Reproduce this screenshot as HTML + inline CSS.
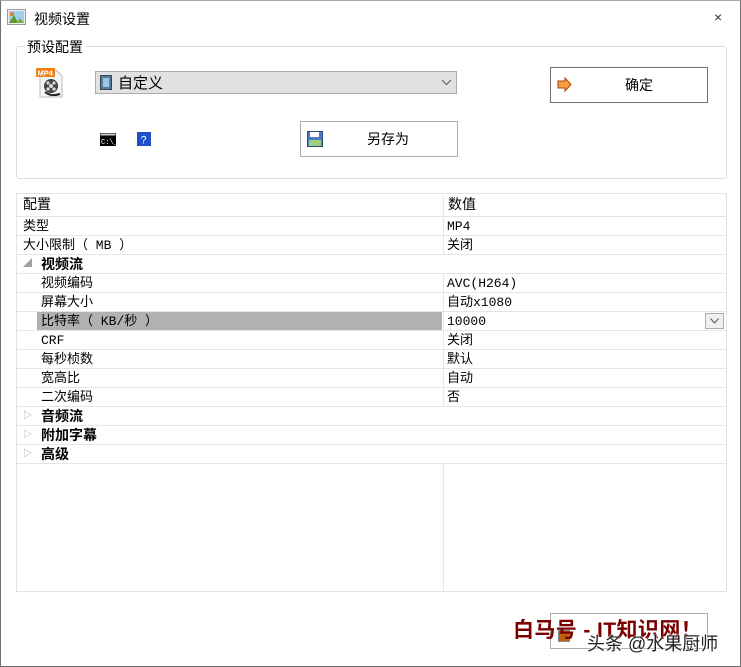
<!DOCTYPE html>
<html><head><meta charset="utf-8"><style>
*{margin:0;padding:0;box-sizing:border-box}
body{width:741px;height:667px;background:#fff;font-family:"Liberation Sans","Noto Sans CJK SC",sans-serif;font-size:14px;color:#000;position:relative;overflow:hidden}
.win{position:absolute;left:0;top:0;width:741px;height:667px;border:1px solid #707070;border-top-color:#aaa}
.abs{position:absolute}
.btn{position:absolute;border:1px solid #adadad;background:#fff}
.row{position:absolute;left:17px;width:709px;height:19px;border-bottom:1px solid #e6e6e6;font-size:13px;line-height:18px;font-family:"Liberation Mono","Noto Sans CJK SC",monospace}
.row .a{position:absolute;left:6px;top:1px}
.row .b{position:absolute;left:430px;top:1px}
.row .in{left:24px}
.row .bold{font-weight:bold;left:24px;top:0;font-family:"Noto Sans CJK SC",sans-serif}
.cat{background:#fff;z-index:2}
.tri{position:absolute;left:6px;top:0;color:#a0a0a0;font-size:9px}
</style></head><body>
<div class="win"></div>
<svg class="abs" style="left:7px;top:9px" width="19" height="16" viewBox="0 0 19 16"><rect x="0.5" y="0.5" width="18" height="15" fill="#eee" stroke="#999"/><rect x="2" y="2" width="15" height="12" fill="#9fd0f0"/><path d="M2 14 L7 6 L11 14Z" fill="#5a9a2a"/><circle cx="5" cy="5" r="2" fill="#e08020"/><path d="M9 14 L13 9 L17 14Z" fill="#7ab040"/></svg>
<div class="abs" style="left:34px;top:9px;font-size:14px">视频设置</div>
<div class="abs" style="left:714px;top:9px;font-size:14px;color:#333">×</div>
<div class="abs" style="left:16px;top:46px;width:711px;height:133px;border:1px solid #dcdcdc;border-radius:3px"></div>
<div class="abs" style="left:24px;top:37px;background:#fff;padding:0 3px;font-size:14px">预设配置</div>
<svg class="abs" style="left:36px;top:66px" width="28" height="32" viewBox="0 0 28 32"><path d="M4 4 H20 L26 10 V31 H4Z" fill="#f4f4f4" stroke="#bbb"/><rect x="0" y="2" width="19" height="9" fill="#f08010"/><text x="1.5" y="9.5" font-size="7.5" font-weight="bold" fill="#fff" font-family="Liberation Sans">MP4</text><circle cx="15" cy="20" r="7" fill="#444"/><circle cx="15" cy="20" r="2" fill="#ddd"/><circle cx="12" cy="17" r="1.6" fill="#ddd"/><circle cx="18" cy="17" r="1.6" fill="#ddd"/><circle cx="12" cy="23" r="1.6" fill="#ddd"/><circle cx="18" cy="23" r="1.6" fill="#ddd"/><path d="M9 26 Q15 31 24 28" stroke="#222" stroke-width="2" fill="none"/></svg>
<div class="abs" style="left:95px;top:71px;width:362px;height:23px;background:#e1e1e1;border:1px solid #adadad"></div>
<svg class="abs" style="left:100px;top:75px" width="12" height="15" viewBox="0 0 12 15"><rect x="0.5" y="0.5" width="11" height="14" fill="#5a7a9a" stroke="#345"/><rect x="3" y="3" width="6" height="9" fill="#9cc8e8"/></svg>
<div class="abs" style="left:118px;top:72px;font-size:15px">自定义</div>
<svg class="abs" style="left:441px;top:79px" width="11" height="7" viewBox="0 0 11 7"><path d="M1 1 L5.5 5.5 L10 1" stroke="#555" fill="none"/></svg>
<div class="btn" style="left:550px;top:67px;width:158px;height:36px;border-color:#707070"></div>
<svg class="abs" style="left:557px;top:77px" width="15" height="15" viewBox="0 0 15 15"><path d="M1 4 H8 V1 L14 7.5 L8 14 V11 H1Z" fill="#f5a040" stroke="#b04000"/></svg>
<div class="abs" style="left:625px;top:75px;font-size:14px">确定</div>
<svg class="abs" style="left:100px;top:133px" width="16" height="13" viewBox="0 0 16 13"><rect width="16" height="13" fill="#000"/><rect x="0.5" y="0.5" width="15" height="2" fill="#ccc"/><text x="1" y="11" font-size="7" fill="#fff" font-family="Liberation Mono">C:\_</text></svg>
<svg class="abs" style="left:137px;top:132px" width="14" height="14" viewBox="0 0 14 14"><rect width="14" height="14" fill="#2050c8"/><text x="3.5" y="11.5" font-size="11" fill="#fff" font-family="Liberation Sans">?</text></svg>
<div class="btn" style="left:300px;top:121px;width:158px;height:36px"></div>
<svg class="abs" style="left:307px;top:131px" width="16" height="16" viewBox="0 0 16 16"><rect x="0.5" y="0.5" width="15" height="15" fill="#4a7cc0" stroke="#2a4c80"/><rect x="3" y="1" width="9" height="5" fill="#fff"/><rect x="2" y="9" width="12" height="6" fill="#9fd080"/></svg>
<div class="abs" style="left:367px;top:129px;font-size:14px">另存为</div>
<div class="abs" style="left:16px;top:193px;width:711px;height:399px;border:1px solid #e3e3e3"></div>
<div class="abs" style="left:443px;top:196px;width:1px;height:395px;background:#e6e6e6"></div>
<div class="row" style="top:196px;height:21px;line-height:20px;font-size:14px;border-bottom:1px solid #e3e3e3"><span class="a" style="top:0">配置</span><span class="b" style="left:431px;top:0">数值</span></div>
<div class="row" style="top:217px"><span class="a">类型</span><span class="b">MP4</span></div>
<div class="row" style="top:236px"><span class="a">大小限制（ MB ）</span><span class="b">关闭</span></div>
<div class="row cat" style="top:255px;font-size:14px"><span class="tri">◢</span><span class="a bold">视频流</span></div>
<div class="row" style="top:274px"><span class="a in">视频编码</span><span class="b">AVC(H264)</span></div>
<div class="row" style="top:293px"><span class="a in">屏幕大小</span><span class="b">自动x1080</span></div>
<div class="row" style="top:312px"><div class="abs" style="left:20px;top:0;width:405px;height:18px;background:#b1b1b1"></div><span class="a in">比特率（ KB/秒 ）</span><span class="b">10000</span><div class="abs" style="left:688px;top:1px;width:19px;height:16px;border:1px solid #adadad;background:#f0f0f0"></div><svg class="abs" style="left:693px;top:6px" width="9" height="6"><path d="M0.5 0.5 L4.5 5 L8.5 0.5" stroke="#555" fill="none"/></svg></div>
<div class="row" style="top:331px"><span class="a in">CRF</span><span class="b">关闭</span></div>
<div class="row" style="top:350px"><span class="a in">每秒桢数</span><span class="b">默认</span></div>
<div class="row" style="top:369px"><span class="a in">宽高比</span><span class="b">自动</span></div>
<div class="row" style="top:388px"><span class="a in">二次编码</span><span class="b">否</span></div>
<div class="row cat" style="top:407px;font-size:14px"><span class="tri">▷</span><span class="a bold">音频流</span></div>
<div class="row cat" style="top:426px;font-size:14px"><span class="tri">▷</span><span class="a bold">附加字幕</span></div>
<div class="row cat" style="top:445px;font-size:14px"><span class="tri">▷</span><span class="a bold">高级</span></div>
<div class="btn" style="left:550px;top:613px;width:158px;height:36px"></div>
<div class="abs" style="left:558px;top:630px;width:12px;height:12px;background:#c06010;border:1px solid #888"></div>
<div class="abs" style="left:513px;top:614px;font-size:21px;font-weight:bold;color:#7a0000;letter-spacing:0.4px">白马号 - IT知识网！</div>
<div class="abs" style="left:587px;top:630px;font-size:18px;color:#222;text-shadow:0 0 2px #fff,0 0 2px #fff">头条 @水果厨师</div>
</body></html>
